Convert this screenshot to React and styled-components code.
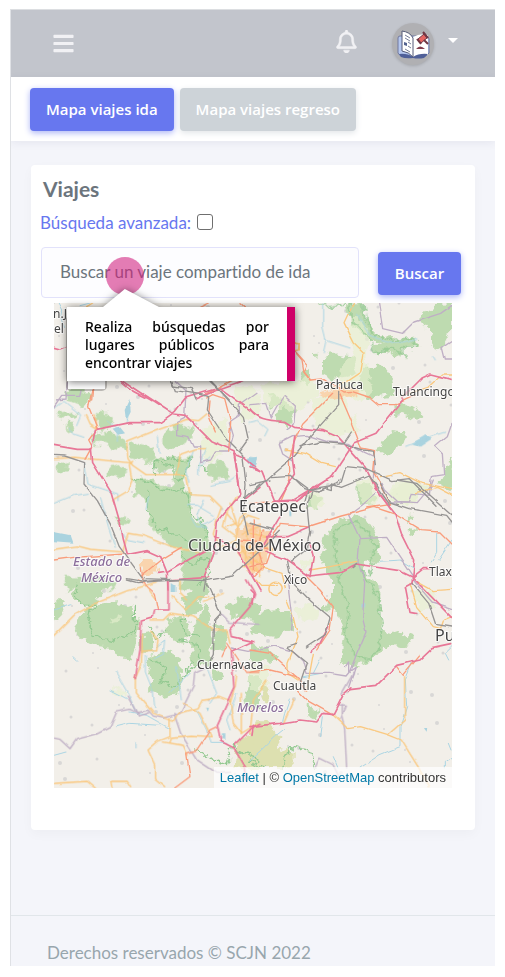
import React from 'react';
import styled, { createGlobalStyle, css } from 'styled-components';
import { FaBars, FaRegBell } from 'react-icons/fa';

const GlobalStyle = createGlobalStyle`
  *, *::before, *::after { box-sizing: border-box; }
  body {
    margin: 0;
    background: #fff;
    color: #6c757d;
    font-family: Lato, "Open Sans", sans-serif;
    font-size: 17px;
    line-height: 24px;
    font-variant-ligatures: none;
  }
`;

const Shell = styled.div`
  margin: 9px 10px 11px;
  border-top: 1px solid #dcdee1;
  border-left: 1px solid #dfe1e5;
  background: #f4f5fa;
  overflow: hidden;
`;

const Header = styled.header`
  display: flex;
  align-items: center;
  height: 67px;
  padding: 0 37px 0 41px;
  background: #c2c5cc;
  color: #f1f1f4;
`;

const IconButton = styled.button`
  display: flex;
  align-items: center;
  padding: 0;
  border: 0;
  background: none;
  color: inherit;
  font-size: 23px;
`;

const AccountGroup = styled.div`
  display: flex;
  align-items: center;
  gap: 34px;
  margin-left: auto;
`;

const BellButton = styled(IconButton)`
  padding-bottom: 4px;
  svg { stroke: currentColor; stroke-width: 10px; }
`;

const AccountButton = styled(IconButton)`
  gap: 14px;
  color: #fff;
`;

const Avatar = styled.span`
  display: flex;
  width: 42px;
  height: 42px;
  border-radius: 50%;
  background: #b0b0b3;
  box-shadow: 0 1px 3px rgba(0, 0, 0, 0.15);
`;

const Caret = styled.span`
  margin-bottom: 6px;
  border: 5px solid transparent;
  border-top-color: #fff;
  border-bottom: 0;
`;

const TabBar = styled.nav`
  display: flex;
  gap: 6px;
  padding: 11px 19px 10px;
  background: #fff;
  box-shadow: 0 2px 8px rgba(60, 70, 110, 0.08);
`;

const Button = styled.button`
  min-width: 83px;
  height: 43px;
  padding: 0 15px 2px;
  border: 1px solid transparent;
  border-radius: 4px;
  color: #fff;
  font: 600 15px/24px "Open Sans", sans-serif;
  white-space: nowrap;
  ${({ $variant }) =>
    $variant === 'muted'
      ? css`
          background: #cdd3d8;
          box-shadow: 0 2px 6px #e1e5e8;
        `
      : css`
          background: #6777ef;
          box-shadow: 0 2px 6px #acb5f6;
        `}
`;

const Card = styled.main`
  margin: 24px 20px 85px;
  padding: 10px 0 42px;
  border-radius: 4px;
  background: #fff;
  box-shadow: 0 4px 12px rgba(0, 0, 0, 0.03);
`;

const Title = styled.h1`
  margin: 0 12px 8px;
  font-size: 21px;
  line-height: 28px;
  font-weight: 700;
`;

const AdvancedRow = styled.div`
  display: flex;
  align-items: center;
  gap: 6px;
  margin: 0 9px 12px;
  color: #6777ef;
`;

const CheckBox = styled.input`
  appearance: none;
  width: 16px;
  height: 16px;
  margin: 0 0 2px;
  border: 1px solid #6f6f6f;
  border-radius: 3px;
  background: #fff;
  &:checked { background: #6777ef; }
`;

const SearchForm = styled.form`
  display: flex;
  align-items: flex-end;
  gap: 19px;
  margin: 0 14px 5px 10px;
  & > ${Button} { margin-bottom: 3px; }
`;

const SearchField = styled.div`
  position: relative;
  flex: 1;
  min-width: 0;
`;

const SearchInput = styled.input`
  display: block;
  width: 100%;
  height: 51px;
  padding: 0 18px 2px;
  border: 1px solid #e2e2fb;
  border-radius: 4px;
  background: #fdfdff;
  color: #6c757d;
  font: inherit;
  font-variant-ligatures: none;
  &::placeholder { color: #6c757d; opacity: 1; }
`;

const Marker = styled.span`
  position: absolute;
  z-index: 2;
  top: 10px;
  left: 65px;
  width: 38px;
  height: 38px;
  border-radius: 50%;
  background: rgba(209, 31, 126, 0.58);
`;

const Hint = styled.div`
  position: absolute;
  z-index: 3;
  top: 60px;
  left: 26px;
  width: 228px;
  padding: 11px 18px 9px;
  border-right: 8px solid #cf0068;
  background: #fff;
  color: #000;
  font: 500 14px/18px "Noto Sans", sans-serif;
  text-align: justify;
  filter: drop-shadow(0 1px 4px rgba(0, 0, 0, 0.55));
  &::before {
    content: '';
    position: absolute;
    bottom: 100%;
    left: 36px;
    width: 56px;
    height: 18px;
    background: #fff;
    clip-path: polygon(39% 0, 100% 100%, 0 100%);
  }
`;

const MapFrame = styled.section`
  position: relative;
  height: 485px;
  margin: 0 23px;
  overflow: hidden;
  background: #f2efe9;
`;

const MapDrawing = styled.svg`
  display: block;
  width: 100%;
  height: 100%;
`;

const ZoomControl = styled.div`
  position: absolute;
  top: 12px;
  left: 12px;
  display: flex;
  flex-direction: column;
  width: 41px;
  border: 2px solid rgba(0, 0, 0, 0.22);
  border-radius: 5px;
  background-clip: padding-box;
`;

const ZoomButton = styled.button`
  height: 36px;
  border: 0;
  background: #fff;
`;

const Attribution = styled.div`
  position: absolute;
  right: 0;
  bottom: 0;
  padding: 0 6px;
  background: rgba(255, 255, 255, 0.7);
  color: #333;
  font: 13px/21px "Liberation Sans", Arial, sans-serif;
  white-space: nowrap;
  a { color: #0078a8; text-decoration: none; }
`;

const Footer = styled.footer`
  padding: 25px 36px 1px;
  border-top: 1px solid #e1e6ea;
  color: #98a6ad;
`;

const styles = {
  forest: { fill: '#bedbb0' },
  pale: { fill: '#e6efcf', fillOpacity: 0.65 },
  olive: { fill: '#dde0b0' },
  city: { fill: '#fbcb9a', fillOpacity: 0.75 },
  lake: { fill: '#aad3df' },
  park: { fill: 'none', stroke: '#93c991', strokeWidth: 4 },
  stream: { fill: 'none', stroke: '#abd5e3', strokeWidth: 3 },
  border: { fill: 'none', stroke: '#bfafc5', strokeWidth: 4 },
  minor: { fill: 'none', stroke: '#fac87f', strokeWidth: 4 },
  trunk: { fill: 'none', stroke: '#f99d7c', strokeWidth: 4 },
  motorway: { fill: 'none', stroke: '#e87797', strokeWidth: 5 },
  rail: { fill: 'none', stroke: '#969493', strokeWidth: 4 },
};

const order = Object.keys(styles);
const roughKinds = ['forest', 'pale', 'olive', 'park', 'city'];

/* Every sheet is drawn at three times the map scale. */
const sheets = [
  {
    x: 40, y: 240,
    shapes: {
      forest: ['M210 190h45v14h-42z', 'M95 455l55-5 5 30h-55z', 'M790 400l20-20v60l-30-15z'],
      stream: ['M55 190l10 20-5 25 10 30', 'M150 189l-30 8'],
      border: ['M50 480l28-3 4-50'],
      minor: ['M140 200l18-11', 'M765 306l12 8-2 16-12 2'],
      trunk: ['M158 450l-3 30', 'M480 203l28-14', 'M600 188l16 15', 'M766 336l20 24 6 36 18 24'],
      motorway: ['M42 322l18 5 20-8', 'M240 418c12 24 60 44 96 64', 'M470 476l70-30 68-24'],
      rail: ['M390 420l10 18 54 8 14 34', 'M508 418l60 62'],
    },
  },
  {
    x: 50, y: 380,
    shapes: {
      pale: ['M545 20l80 0 5 90-50 10-20-40z', 'M455 150l70-40 15 80-55 60-30-10z'],
      forest: [
        'M48 28l50-8 14 38-18 24-40-14z', 'M28 98l40-6 18 10-20 14-36-6z', 'M45 130l32 2-6 20-26 6z',
        'M142 96l30 0 24 30-36 26-20-24z', 'M126 160l60-6 44 36-6 20-64-18-24 0z',
        'M240 186l70 14 10 38-26 14-52-18z', 'M340 150l60-18 30 14 0 30-60 34-30-8z',
        'M170 262l48-8 16 20-28 20-36-8z', 'M28 250l22-4-2 30-22 4z',
        'M250 296l60 0 14 22 34 0 20-26 20 30 24 36 6 50 34 34 22 50-48 24-70-8-44-54-24-20 2-40-8-30-36-22z',
        'M310 250l20-22 50 2 4 30-60 20z', 'M380 236l44-8-20 90-30 0z',
        'M470 262l34-20 38 30-8 26-60-4z', 'M196 412l20-10 24 24-30 10z', 'M40 590l100 5 60 10-20 25h-130z',
        'M390 520l90-36 16 54-30 36 0 56h-76l10-50z',
      ],
      city: ['M560 440l70-10v150l-40-10-24-60z', 'M268 546l46-6 12 30-40 14z'],
      lake: ['M224 90l14-30 4 36-14 26z', 'M188 146l18-6 16 20-18 4z', 'M594 236l30-6-8 30-20-10z', 'M12 456l50 10 8 22-58-4z'],
      park: ['M310 280l4-34 40-18 34 16 34-10-20 66-30-4 0-40-60-10z', 'M252 298l50 10 40 26 56-10 20 60 34 36 20 50', 'M296 336l0 60 30 50 60 20 40 20', 'M470 270l-24-8M396 520l24 30 50-14 14 40-40 40'],
      stream: ['M12 86l30-22 50 40-12 30', 'M58 142l14 20 30 10', 'M174 124l28 20 0 40', 'M240 80l-12 50', 'M322 170l6 50', 'M430 210l-20 60 10 40M470 205l-24 54 0 26M480 230l-30 30', 'M480 316l60-12 14-10', 'M104 252l10 60 90 30 0 20', 'M12 370l60-24 40-6', 'M152 352l24 90 20 60', 'M210 448l20 30 50 10', 'M460 360l-20 46 14 30 40-20M410 376l30 0 50 30M470 440l-30 0-20-30', 'M296 350l-8 36'],
      border: ['M12 84l26-38 48 0 4-16', 'M376 2l32 30-4 80-24 12 0 40 36 6 14 28 22 0 0 50 30-8 14-24 40 0 14-50-12-40 30-20 0-30 50-36'],
      minor: ['M106 106l12 26 24 14', 'M140 148l-8-44', 'M230 186l100-40 80-28 36 4 24-20', 'M230 186l4 50 14 20 40 28 120 0', 'M188 360l44-26 14-32-8-48 10-10', 'M12 236l60-4 168 16', 'M12 508l70-10 40 10 96 8 16-56 48 8 90 34 74 16', 'M378 284l10-60 50-18 30 0', 'M410 290l10 54 60 4 34 34-14 40-10 40 20 40 48-24 10-60 24-20', 'M560 350l-30 50 34 40 30-34 30 10M576 460l50-20M550 484l70 40M574 500l56 90M590 430l0 130 40 20', 'M540 370l20 60-30 10M570 520l50-30M580 560l40-20M530 400l-10 40 40 30'],
      trunk: ['M126 30l-10 50 26 66-26 34 12 22-20 36', 'M470 54l18-10 36 12 18 70-6 90', 'M12 540l60-8 154-10', 'M274 588l60-50 60-36', 'M274 560l6 50', 'M470 40l76-38', 'M480 60l-4 46 20 50', 'M610 420v150M570 480l60 4'],
      motorway: ['M216 0l156 102 34 4 76 76 70 30 20 130', 'M140 148l96-20 94 0 46-34 30-40 80-24 26-6', 'M516 28l114 84', 'M12 196l70 12 42 0 12-60', 'M124 204l4 44 56 90 26 90 10 50 12 44', 'M232 524l60-12 40 18 20 50 2 50', 'M326 580l28-4 60-36 56-30', 'M552 220l26 10 52 42', 'M552 220l20 126-20 20-50 60-8 80-30 80', 'M494 470l70 44 66 116', 'M630 322l-50 40', 'M350 600l130-8'],
      rail: ['M12 226l32 2 60 20-2 64 40 50 38 68 28 70 70 96 190 6 80-14 80-74 60-60', 'M366 4l10 28 80 12 20 6-4 40 56 84 50 50 10 90-8 90 14 60', 'M480 4l30 28 70 80 14 62-26 36', 'M232 596l50 8 86-6', 'M468 594l-6 36M630 312l-50 44'],
    },
  },
  {
    x: 250, y: 300,
    shapes: {
      pale: ['M296 60l30-20 30 70-10 90 24 70-40 40-50-30-10-80 40-40z', 'M190 290l90-10 50 110-80 20-50-30z', 'M40 250l150-14 20 40-70 60-100-20z', 'M420 560l60-30 60 40-60 40-70-6z', 'M320 540l50-10 14 80-50 0z', 'M176 570l40 10 10 36-40 14z'],
      forest: [
        'M296 10h42l6 50 44 50 40-6 8 22-70 4-60-54-20-50z',
        'M510 50l50-40 46-4 0 80-30 60-30-10-10-50z', 'M210 176l40-16 60 10 14 30-10 24-60 14-44-24z',
        'M340 200l60 0 30 40 6 46-80 10-30-40z', 'M436 320l30-14 56 34-20 22-60-16z',
        'M420 396l44 4-10 34-34 34-36-16z', 'M186 160l20-2-8 14z', 'M90 310l48 20-20 50-36-20z',
        'M600 476l8 0 0 90-40-10z', 'M370 138l56-20 66-8 24 30-50 0-6 30-60-16-20 10z', 'M56 290l36-4 10 30-40 10z', 'M326 560l30-8 14 40-40 12z',
      ],
      city: ['M206 284l44-22 60-4 18 24-44 12-40 6z'],
      lake: ['M0 470l24 4-8 30-16-2z', 'M486 430l40-24 20 10-36 24z'],
      park: ['M298 12l6 48 60 64 10 36 54-14 36 26 0-30 40 4-10-32-70 4-50-10-30-50-6-48', 'M214 18l100-8'],
      stream: ['M218 12l0 70 10 40-8 36M226 120l30 10 44 14', 'M320 40l40 70 80 20 60-14', 'M0 370l24-6 30 24-10 20', 'M470 436l50-20 66-20', 'M550 170l6 10'],
      border: ['M386 10l12 76 60 14 34-34 80-26 34-24', 'M606 120l-30 20 10 40 20 0', 'M0 314l50-4 14 44 20-36 20-30 32 30-4 50-24 18', 'M88 430l40-20 46-4 60 20 60 4 50 30 30 14-4 60', 'M128 482l-30-20-10-30M606 370l-14 40-36 30 24 24 4 60-40 6-6 56-50-6-10 26-60 0'],
      minor: ['M310 8l-28 60 30 60 30 30-10 60-60 40', 'M130 130l18 0 0 20', 'M106 450l60 10 50 30 40 10', 'M606 222l-28 0-44 40-80 26', 'M390 530l60-12 60 30 94 20'],
      trunk: ['M136 154l36 40-10 22 20 24 40-4 60 40 20-2 60 20 24 20 50 0 60-28', 'M248 280l-90 90-24 50-16 60 2 60-30 70', 'M270 284l30 70 20 50 14 40 40 8-6 60 34 60 20 40', 'M350 624l70-10'],
      motorway: ['M0 326c20 30 50 36 100 38l30 18 90 10 46 20 80 90 30 60 46 66', 'M458 300l-80 100-64 26-66 100-80 50-40 24-60 4', 'M456 294l60-60 26-12 64 16', 'M0 500l36 14 36 90', 'M134 412l-6 50 8 60-50 80', 'M190 560l-50 44'],
      rail: ['M266 274l0 40-80 90-60 70-60 50-66 60', 'M150 440l60-14 70 6 24-36M280 430l60 20 30 4 6 40', 'M64 530l60-4 40 40 40 10 70-30 14-46 60 6 80 36 50-6 80 80', 'M176 574l-8 30M204 576l20-10 20 6 0-20 30 10 84-34 60 84'],
    },
  },
  {
    x: 250, y: 480,
    shapes: {
      pale: ['M420 40l60-36 70 16-50 40-70 10z', 'M130 390l60-20 20 40-50 20z', 'M150 240l40-10 0 26-40 10z', 'M490 330l50 0 20 50-50 10z', 'M0 550l60 10 0 70H0z'],
      forest: [
        'M310 106l40 10 20 30 20 40-14 20 20 24-14 18-40 0-4 24 50 50 0 50 10 10-6 70 30 10 30-10 34 24-20 30-40-10-30 10-20 30-60 24-40-10-4-40 10-50-16-60-40-10 20-40 0-60-20-10-10-60 14-60 20-30z',
        'M20 400l60-14 40 14 10 50-60 20-70-14z', 'M320 10l40 0 14 60-56 4z', 'M176 40l44 10-20 40-26-10z',
        'M0 490l50 10 34 30-10 20-74-10z', 'M560 0h46v30l-30-14z', 'M474 150l26-10 0 20-20 6z', 'M472 110l16 0 0 12-16 4z', 'M0 580l24 4 0 46H0z', 'M212 372l16 0 0 16-16 0z',
      ],
      city: ['M0 140l44 6 20 60-24 60-40 20z'],
      lake: ['M334 372l12 0-2 14-10 0z', 'M118 94l6 0 0 14-6 0z'],
      park: ['M320 130l-30-4-40 36 6 64 14 50 4 50 24 46-6 50-4 50 30 60 40 10 30-40 10-70-6-60-30-60-30-40 34 10-4-40 10-20 0-40z'],
      stream: ['M390 244l60-4 40 24', 'M560 160l0 60-16 26M606 180l-40 60', 'M160 590l54-10', 'M190 580l20-40', 'M606 500l-20 20 10 20'],
      border: ['M550 0l-8 20-40 48-60-4-36-34-10-20', 'M376 42l-40 34-40 30 34 70-6 70 20 60-6 110 10 40-50 120-10 12-50-8-70 0-10-36-30-30-54-16-80 16-50-10', 'M330 176l80-4 40 60 40 60', 'M116 310l10 80-4 60', 'M286 560l10-14 0 30 20-14-20 60', 'M486 296l60 70 60 20'],
      minor: ['M180 270l60-10 80-16', 'M0 230l36 30 60 20 10 44', 'M18 300l14 16 50 0', 'M62 340a20 20 0 1 1 1 1', 'M110 360l20 50 14 60-30 80 0 30 30 20', 'M480 310l20 70 50 60 24 6M500 304l50 28 54-4', 'M606 410l-26 10-10 30', 'M500 38l60-16 46 24', 'M170 630l20-110', 'M0 160l50 10 20 40M0 220l60-20M30 150v120'],
      trunk: ['M90 130l90 8 94-30 100-26 60 20 80 50 56 4 36 36', 'M170 290l40 40 40 50-10 70-40 60', 'M0 510l60 10 90 80 20 30', 'M0 70l80-6', 'M90 134l-50 70M40 150l-20 50 20 60-30 30M0 190l64 20-14 40-50 10', 'M0 580l60-10 80 20', 'M440 560l20 26 50-60'],
      motorway: ['M80 64l60 0 90-64', 'M368 0l6 24 60 76 20 60 40 80-8 70', 'M48 214l60 24 70 50 90-10 50-26 130 20 40 20 116 120', 'M180 290l10-60-10-40', 'M180 140l-70 30-60 0', 'M90 110l-60 100M0 330l10 10-4 30', 'M486 310l-20 10 14 74 20 4', 'M490 290l30-24 20 0', 'M180 514l30-24 26-50', 'M300 626l80-10 60-60 70-16 36-34 56-12'],
      rail: ['M0 14l60-14M140 0l40 30 60-10 30-20', 'M188 36l-14 40 8 80-10 50-50 40', 'M390 6l30 60 60 20 110 20 16 20', 'M440 0l60 10 106 94', 'M0 130l70 20', 'M110 244l10 60 60 60 60 50-14 50-60 40', 'M140 490l-30 10 60 50-20 60', 'M486 310l50 60 20 60 50 8', 'M320 250l-10 10'],
    },
  },
  {
    x: 50, y: 580,
    shapes: {
      forest: [
        'M70 0h90l-4 50-50 30-34-24z', 'M12 64l36 0-16 40-20 24z', 'M90 100l40-30 70-6 40 14 26 50-10 70-14 40-40-4-14-30-50-6-40-20-26-30z',
        'M270 170l34-6 4 54-36 0z', 'M300 230l50-20 30 20 20 60-14 50-40 10-50-16 10-40-16-30z',
        'M356 120l44-14 20 50-20 40-30-16-20-20z', 'M430 150l40-90 20 90-10 100-50 10-10-60z', 'M390 50l50-20 20 50-40 30z',
        'M420 0l40 0 20 40-50 30z', 'M520 80l60-30 50 20 0 50-70-4z', 'M600 300l30-10v100l-50-20z', 'M490 250l30 50-30 0z', 'M500 130l34 20-10 60-34-10z',
      ],
      pale: ['M180 320l50 20 0 14-50-20z', 'M180 116l30-10 4 20-24 10z'],
      olive: ['M560 490l70-50 0 130-76-10z'],
      lake: ['M362 6l14 10 0 20-14 0z', 'M468 380l12 0-4 12z', 'M516 460l10 0 0 20-12-4z'],
      park: ['M70 10l20 60 40 0-14 50 10 44 70 20 60-30 0-70', 'M304 236l50 30-20 40 50 16 0-30M380 180l60 10 10 60-50 40M356 150l-40 30-16-40M400 100l0 60 50 10M400 290l30-50', 'M438 500l50 40 40 14 20-60 80 50'],
      stream: ['M196 274l40 70 20 50M180 330l50 26', 'M66 230l14 14', 'M200 440l40-10 90 6', 'M240 396l50 10 70 40', 'M286 226l0 50 24 60 4 50', 'M320 200l24-20-4 40-30 14', 'M380 260l14 100M420 280l-60 60', 'M470 260l30 80-20 30', 'M440 390l30 60 10 40 50 0', 'M258 490l0 14', 'M12 526l36-10', 'M560 340l-30 80 10 30', 'M12 90l50-16'],
      border: ['M12 474l18 4 30 28 20-28 60-16 40-20 20-46 40-8 20 10 34-8 16 18 30 6 50-14 40-80 4-40 30-14', 'M510 100l30 30 84 6', 'M232 348l34 60 30-10M372 400l20 60 50 80 60 40 40-4'],
      minor: ['M12 166l60-60 60-34 100-40 90-26', 'M256 296l0 40 34 40 20 24 60 24 14-24 60-16 14-26 50-6 34 14 14-50 4-30', 'M278 166l-4 90-20 40', 'M300 120l40 0 20-20 70 10 60 40 40 0 10 40', 'M300 150l24 30-4 30-46 4', 'M366 50l40 40 40-40 30 0M390 0l0 40 20 20M400 370l50 30 34 70-60-4-60 6-4 16', 'M360 416l0 54-36 14-30 26 20 44 0 40 30 26', 'M340 486l60 10 14 30', 'M12 610l100-6 24 20', 'M186 624l-4-20 50 0 10 16', 'M540 360l10 70 24 30 50-30', 'M574 340l0 120', 'M520 40l-60 24M320 60l-30-40'],
      trunk: ['M266 0l50 40 10 50', 'M500 440l-20 10-40 60-30 10 10 70-46 34', 'M530 190l60 90 40 0', 'M530 200l-14 30'],
      motorway: ['M354 0l0 90-40 0-4 20-36 10-4 90-14 86', 'M590 0l24 40-14 40-60 70 4 20 64 14-64 30 8 110-50 110 10 50 40 20 34 60 4 40', 'M556 494l50-50 24-14'],
      rail: ['M232 0l30 8 140-10', 'M462 0l20 30 30 70-18 20-4 100-10 20'],
    },
  },
  {
    x: 250, y: 640,
    shapes: {
      olive: ['M14 250l40 0 44 44-20 30 50 10 0 50H10z', 'M40 130l24 10-20 50-10-10z'],
      forest: ['M170 190l36 20-10 30-24-14z', 'M0 110h24l-4 60H0z'],
      lake: ['M522 268l10-4-2 14z'],
      park: ['M104 384l20-64 70 20-10 44M0 360l40 24'],
      stream: ['M0 360l34-30 40-40 30-24', 'M118 180l-14 40-6 24', 'M220 230l-8 60', 'M330 384l60-40 60-24 0-60 20-60-4-80 20-50', 'M606 350l-20 14 0 20', 'M250 350l14 34', 'M595 310l8 20'],
      border: ['M274 196l0 30 10 40 6 118M266 198l20 0-16 40', 'M310 100l-34 60', 'M195 384l14-30 40 20 20 40'],
      minor: ['M250 226l44 40 40-6 80 24 40 16 50 80 36 64', 'M414 284l50-44 0-130', 'M130 180l-30 70', 'M0 280l10-100 40-60'],
      trunk: ['M146 154l30 30 74 42'],
      motorway: ['M0 260l90-10 60-10 50 6 20-26 30 4 30-60 22-20', 'M10 256l-4 30'],
    },
  },
];

const townDots = Array.from({ length: 190 }, (_, i) => ({
  x: 54 + ((i * 137) % 398),
  y: 303 + ((i * 89 + ((i * i) % 47)) % 485),
  r: 1 + (i % 3) / 2,
}));

const places = [
  { x: 316, y: 389, size: 12, name: 'Pachuca' },
  { x: 393, y: 396, size: 12, name: 'Tulancingo' },
  { x: 239, y: 512, size: 16, name: 'Ecatepec' },
  { x: 188, y: 551, size: 16, name: 'Ciudad de México' },
  { x: 284, y: 584, size: 12, name: 'Xico' },
  { x: 429, y: 576, size: 12, name: 'Tlax' },
  { x: 435, y: 641, size: 16, name: 'Pu' },
  { x: 197, y: 669, size: 12, name: 'Cuernavaca' },
  { x: 273, y: 690, size: 12, name: 'Cuautla' },
  { x: 237, y: 712, size: 13, name: 'Morelos', region: true },
  { x: 73, y: 566, size: 13, name: 'Estado de', region: true },
  { x: 81, y: 582, size: 13, name: 'México', region: true },
  { x: 53, y: 318, size: 12, name: 'n.J' },
  { x: 54, y: 333, size: 12, name: 'el' },
];

const PlaceName = styled.text`
  fill: ${({ $region }) => ($region ? '#8d6f9c' : '#444')};
  font-family: "Noto Sans", sans-serif;
  font-style: ${({ $region }) => ($region ? 'italic' : 'normal')};
  font-weight: ${({ $region }) => ($region ? 500 : 400)};
  paint-order: stroke;
  stroke: rgba(255, 255, 255, 0.75);
  stroke-width: 2px;
`;

function RegionMap() {
  return (
    <MapDrawing viewBox="54 303 398 485" preserveAspectRatio="xMidYMid slice" role="img" aria-label="Mapa de viajes">
      <defs>
        <filter id="rough" x="-5%" y="-5%" width="110%" height="110%">
          <feTurbulence type="fractalNoise" baseFrequency="0.11" numOctaves="3" seed="4" />
          <feDisplacementMap in="SourceGraphic" scale="12" xChannelSelector="R" yChannelSelector="G" />
        </filter>
        <filter id="wavy" x="-5%" y="-5%" width="110%" height="110%">
          <feTurbulence type="fractalNoise" baseFrequency="0.06" numOctaves="2" seed="9" />
          <feDisplacementMap in="SourceGraphic" scale="4" xChannelSelector="R" yChannelSelector="G" />
        </filter>
      </defs>
      <g fill="#d9d7d6">
        {townDots.map((dot, i) => <circle key={i} cx={dot.x} cy={dot.y} r={dot.r} />)}
      </g>
      {order.map((kind) => (
        <g key={kind} {...styles[kind]} strokeLinejoin="round" strokeLinecap="round"
          filter={roughKinds.includes(kind) ? 'url(#rough)' : 'url(#wavy)'}>
          {sheets.map((sheet) => (
            <g key={`${sheet.x}-${sheet.y}`} transform={`translate(${sheet.x} ${sheet.y}) scale(${1 / 3})`}>
              {(sheet.shapes[kind] || []).map((d) => <path key={d} d={d} />)}
            </g>
          ))}
        </g>
      ))}
      {places.map(({ x, y, size, name, region }) => (
        <PlaceName key={name + y} x={x} y={y} fontSize={size} $region={region}>{name}</PlaceName>
      ))}
    </MapDrawing>
  );
}

function BookLogo() {
  return (
    <svg width="42" height="42" viewBox="0 0 42 42" fill="none" aria-hidden="true">
      <path d="M6 15q0-2 2-2h26q3 1 3 3v14q-3 4-8 4H12q-5-1-6-4z" fill="#b5c7ef" stroke="#71799e" />
      <path d="M21 14q7-4 15-2v20q-8-1-15 3z" fill="#fff" />
      <path d="M7 31q8-1 14 3 6-4 15-3l-4 4q-6 1-11 0-7 1-12-1z" fill="#4f5f98" />
      <path d="M10 8q8 1 11 7v19q-4-5-11-6z" fill="#fff" stroke="#555b78" />
      <path d="M13 12l5 3M13 15l5 3M16 19l3 2M16 23l3 2M13 26l5 3" stroke="#777e99" />
      <path d="M12 19l3 1v3l-3-1z" fill="#53638f" />
      <path d="M26 16l6-5 3 4-6 5z" fill="#e66461" stroke="#703744" />
      <path d="M25 16l4 5M31 9l5 6M32 17l4 4" stroke="#703744" strokeWidth="2" />
      <path d="M24 26q4-5 9 0z" fill="#823d4d" />
    </svg>
  );
}

export default function App() {
  return (
    <>
      <GlobalStyle />
      <Shell>
        <Header>
          <IconButton type="button" aria-label="Menú"><FaBars /></IconButton>
          <AccountGroup>
            <BellButton type="button" aria-label="Notificaciones"><FaRegBell /></BellButton>
            <AccountButton type="button" aria-label="Cuenta">
              <Avatar><BookLogo /></Avatar>
              <Caret />
            </AccountButton>
          </AccountGroup>
        </Header>
        <TabBar>
          <Button type="button">Mapa viajes ida</Button>
          <Button type="button" $variant="muted">Mapa viajes regreso</Button>
        </TabBar>
        <Card>
          <Title>Viajes</Title>
          <AdvancedRow>
            <label htmlFor="advanced">Búsqueda avanzada:</label>
            <CheckBox id="advanced" type="checkbox" />
          </AdvancedRow>
          <SearchForm onSubmit={(event) => event.preventDefault()}>
            <SearchField>
              <SearchInput type="text" aria-label="Buscar un viaje" placeholder="Buscar un viaje compartido de ida" />
              <Marker />
              <Hint role="tooltip">Realiza búsquedas por lugares públicos para encontrar viajes</Hint>
            </SearchField>
            <Button type="submit">Buscar</Button>
          </SearchForm>
          <MapFrame>
            <RegionMap />
            <ZoomControl>
              <ZoomButton type="button" aria-label="Acercar" />
              <ZoomButton type="button" aria-label="Alejar" />
            </ZoomControl>
            <Attribution>
              <a href="#leaflet">Leaflet</a> | © <a href="#openstreetmap">OpenStreetMap</a> contributors
            </Attribution>
          </MapFrame>
        </Card>
        <Footer>Derechos reservados © SCJN 2022</Footer>
      </Shell>
    </>
  );
}
